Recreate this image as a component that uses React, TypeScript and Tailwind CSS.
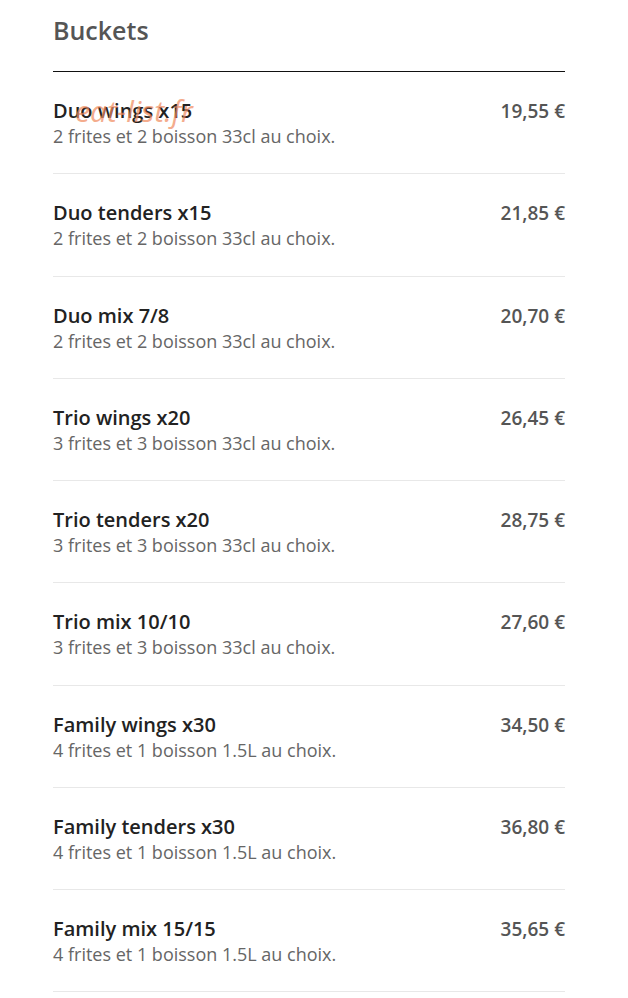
import React from "react";

const items = [
  { name: "Duo wings x15", desc: "2 frites et 2 boisson 33cl au choix.", price: "19,55 €" },
  { name: "Duo tenders x15", desc: "2 frites et 2 boisson 33cl au choix.", price: "21,85 €" },
  { name: "Duo mix 7/8", desc: "2 frites et 2 boisson 33cl au choix.", price: "20,70 €" },
  { name: "Trio wings x20", desc: "3 frites et 3 boisson 33cl au choix.", price: "26,45 €" },
  { name: "Trio tenders x20", desc: "3 frites et 3 boisson 33cl au choix.", price: "28,75 €" },
  { name: "Trio mix 10/10", desc: "3 frites et 3 boisson 33cl au choix.", price: "27,60 €" },
  { name: "Family wings x30", desc: "4 frites et 1 boisson 1.5L au choix.", price: "34,50 €" },
  { name: "Family tenders x30", desc: "4 frites et 1 boisson 1.5L au choix.", price: "36,80 €" },
  { name: "Family mix 15/15", desc: "4 frites et 1 boisson 1.5L au choix.", price: "35,65 €" },
];

export default function App() {
  return (
    <div className="min-h-[998px] bg-white pl-[53px] pr-[63px] pt-[14px]" style={{ fontFamily: '"Open Sans", sans-serif' }}>
      <h2 className="text-[25px] leading-[32px] font-semibold text-[#555555]">Buckets</h2>
      <div className="mt-[25px] border-t border-[#111111]" />
      <div>
        {items.map((it, i) => (
          <div key={i} className="relative flex justify-between border-b border-[#e8e8e8] pt-[27px] pb-[24.25px]">
            <div>
              <div className="text-[20px] leading-[24px] font-semibold text-[#222222]">{it.name}</div>
              <div className="text-[18px] leading-[26px] text-[#666666]">{it.desc}</div>
            </div>
            <div className="text-[19px] leading-[24px] font-semibold text-[#555555]">{it.price}</div>
            {i === 0 && (
              <div className="pointer-events-none absolute left-[22px] top-[16px] text-[30px] italic text-[#f08a5d] opacity-70" style={{ fontFamily: '"Open Sans", sans-serif' }}>
                eat-list.fr
              </div>
            )}
          </div>
        ))}
      </div>
    </div>
  );
}
